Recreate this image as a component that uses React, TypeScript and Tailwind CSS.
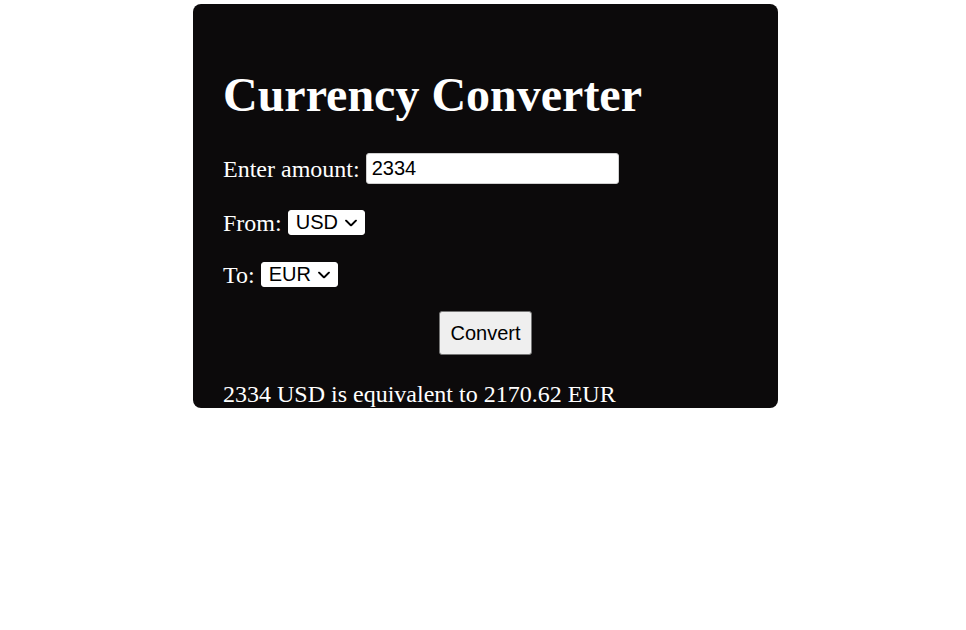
import React from "react";

function Chevron() {
  return (
    <svg
      className="pointer-events-none absolute right-[8px] top-1/2 -translate-y-1/2"
      width="12"
      height="7"
      viewBox="0 0 12 7"
      fill="none"
    >
      <path d="M1 1l5 5 5-5" stroke="#000" strokeWidth="1.8" strokeLinecap="round" strokeLinejoin="round" />
    </svg>
  );
}

function Select({ value }: { value: string }) {
  return (
    <span className="relative inline-flex">
      <select className="appearance-none w-[77px] h-[25px] bg-white text-black rounded-[3px] border border-white pl-[7px] text-[20px] leading-[23px] font-['Liberation_Sans',sans-serif] outline-none">
        <option>{value}</option>
      </select>
      <Chevron />
    </span>
  );
}

export default function App() {
  return (
    <div className="w-[966px] h-[630px] bg-white">
      <div className="ml-[193px] mt-[4px] w-[585px] h-[404px] rounded-[8px] bg-[#0c0a0b] px-[30px] text-white font-['Liberation_Serif',serif] overflow-hidden">
        <h1 className="pt-[63px] text-[48px] font-bold leading-[56px]">Currency Converter</h1>
        <div className="mt-[30px] flex items-center h-[31px] text-[24px]">
          <span>Enter amount:</span>
          <input
            defaultValue="2334"
            className="ml-[6px] w-[253px] h-[31px] bg-white text-black rounded-[3px] border border-[#d0d0d0] px-[5px] text-[20px] font-['Liberation_Sans',sans-serif] outline-none"
          />
        </div>
        <div className="mt-[26px] flex items-center h-[25px] text-[24px]">
          <span className="mr-[6px]">From:</span>
          <Select value="USD" />
        </div>
        <div className="mt-[27px] flex items-center h-[25px] text-[24px]">
          <span className="mr-[6px]">To:</span>
          <Select value="EUR" />
        </div>
        <div className="mt-[24px] flex justify-center">
          <button className="w-[93px] h-[44px] bg-[#efefef] text-black rounded-[3px] border border-[#767676] text-[20px] font-['Liberation_Sans',sans-serif]">
            Convert
          </button>
        </div>
        <p className="mt-[25px] text-[24px] leading-[28px]">2334 USD is equivalent to 2170.62 EUR</p>
      </div>
    </div>
  );
}
